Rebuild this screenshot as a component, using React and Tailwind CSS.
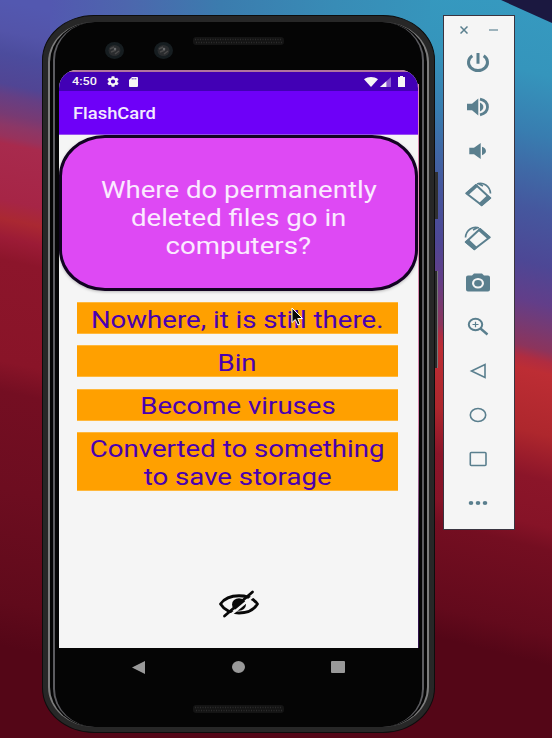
import React from "react";

function Wallpaper() {
  return (
    <svg className="absolute inset-0" width="552" height="738" viewBox="0 0 552 738">
      <defs>
        <linearGradient id="left" gradientUnits="userSpaceOnUse" x1="0" y1="0" x2="-150" y2="720">
          <stop offset="0" stopColor="#5358b0" />
          <stop offset="0.04" stopColor="#5354a9" />
          <stop offset="0.07" stopColor="#4c4c9d" />
          <stop offset="0.11" stopColor="#514594" />
          <stop offset="0.125" stopColor="#653f84" />
          <stop offset="0.15" stopColor="#783a73" />
          <stop offset="0.165" stopColor="#8c3766" />
          <stop offset="0.18" stopColor="#98325c" />
          <stop offset="0.19" stopColor="#a82a4d" />
          <stop offset="0.265" stopColor="#a62546" />
          <stop offset="0.29" stopColor="#aa2832" />
          <stop offset="0.315" stopColor="#9c1b36" />
          <stop offset="0.345" stopColor="#8c152b" />
          <stop offset="0.48" stopColor="#891428" />
          <stop offset="0.52" stopColor="#740e22" />
          <stop offset="0.65" stopColor="#6d0d20" />
          <stop offset="0.8" stopColor="#600a1b" />
          <stop offset="0.86" stopColor="#540617" />
          <stop offset="1" stopColor="#540617" />
        </linearGradient>
        <linearGradient id="right" gradientUnits="userSpaceOnUse" x1="552" y1="0" x2="370" y2="720">
          <stop offset="0" stopColor="#369ac0" />
          <stop offset="0.1" stopColor="#3595bc" />
          <stop offset="0.18" stopColor="#387db0" />
          <stop offset="0.23" stopColor="#3f69a6" />
          <stop offset="0.28" stopColor="#45579e" />
          <stop offset="0.35" stopColor="#4d4795" />
          <stop offset="0.4" stopColor="#623e89" />
          <stop offset="0.43" stopColor="#763a73" />
          <stop offset="0.46" stopColor="#8c345c" />
          <stop offset="0.475" stopColor="#b02c40" />
          <stop offset="0.49" stopColor="#bd2d34" />
          <stop offset="0.57" stopColor="#ae272d" />
          <stop offset="0.605" stopColor="#9a1c2b" />
          <stop offset="0.63" stopColor="#8b1529" />
          <stop offset="0.69" stopColor="#861327" />
          <stop offset="0.72" stopColor="#740e21" />
          <stop offset="0.83" stopColor="#630a1c" />
          <stop offset="0.87" stopColor="#540617" />
          <stop offset="1" stopColor="#540617" />
        </linearGradient>
        <linearGradient id="top" x1="0" x2="1" y1="0" y2="0">
          <stop offset="0" stopColor="#5358b0" />
          <stop offset="0.2" stopColor="#4d66ad" />
          <stop offset="0.45" stopColor="#3b7cae" />
          <stop offset="0.75" stopColor="#388cb6" />
          <stop offset="1" stopColor="#3695bc" />
        </linearGradient>
      </defs>
      <rect width="240" height="738" fill="url(#left)" />
      <rect x="240" width="312" height="738" fill="url(#right)" />
      <rect x="50" width="380" height="40" fill="url(#top)" />
      <path d="M501 0H552V23Z" fill="#1b1840" />
    </svg>
  );
}

function Lens() {
  return (
    <svg width="19" height="17" viewBox="0 0 19 17">
      <ellipse cx="9.5" cy="8.5" rx="9.5" ry="8.5" fill="#161d20" />
      <ellipse cx="9.5" cy="8.5" rx="6" ry="5.5" fill="#2a2c2e" />
      <path d="M5 7l4-2M6 10l5-2M10 12l4-3" stroke="#4a4a4a" strokeWidth="1.5" />
      <circle cx="10" cy="7" r="1.3" fill="#67686a" />
    </svg>
  );
}

function Speaker() {
  return (
    <svg width="91" height="8" viewBox="0 0 91 8">
      <rect width="91" height="8" rx="3" fill="#141414" />
      <path d="M2 2.5H89M3 5.5H89" stroke="#2c2c2c" strokeWidth="1.5" strokeDasharray="1 1.5" />
    </svg>
  );
}

function StatusBar() {
  return (
    <div className="flex h-[19px] shrink-0 items-center bg-[#4200b5] pl-[13px] pr-[13px] text-[#f5f5f5]">
      <span className="w-[26px] whitespace-nowrap text-[11.5px] leading-none font-medium">
        <span className="inline-block origin-left scale-x-[1.1]">4:50</span>
      </span>
      <svg className="ml-[9px]" width="12" height="11" viewBox="2 2 20 20" preserveAspectRatio="none" fill="currentColor">
        <path d="M19.14 12.94a7 7 0 0 0 0-1.88l2.03-1.58a.5.5 0 0 0 .12-.61l-1.92-3.32a.5.5 0 0 0-.59-.22l-2.39.96a7 7 0 0 0-1.62-.94l-.36-2.54a.5.5 0 0 0-.48-.41h-3.84a.5.5 0 0 0-.47.41l-.36 2.54a7.4 7.4 0 0 0-1.62.94l-2.39-.96a.5.5 0 0 0-.59.22L2.74 8.87a.5.5 0 0 0 .12.61l2.03 1.58a7 7 0 0 0 0 1.88l-2.03 1.58a.5.5 0 0 0-.12.61l1.92 3.32c.12.22.37.29.59.22l2.39-.96c.5.38 1.03.7 1.62.94l.36 2.54c.05.24.24.41.48.41h3.84c.24 0 .44-.17.47-.41l.36-2.54a7.4 7.4 0 0 0 1.62-.94l2.39.96c.22.08.47 0 .59-.22l1.92-3.32a.5.5 0 0 0-.12-.61zM12 15.6a3.6 3.6 0 1 1 0-7.2 3.6 3.6 0 0 1 0 7.2z" />
      </svg>
      <svg className="ml-[10px]" width="9" height="10" viewBox="0 0 10 10" preserveAspectRatio="none">
        <path d="M3.3 0H9a1 1 0 0 1 1 1v8a1 1 0 0 1-1 1H1a1 1 0 0 1-1-1V3z" fill="currentColor" />
        <path d="M3.6 1.2v1.2M5.5 1.2v1.2M7.5 1.2v1.2" stroke="#4200b5" strokeWidth=".9" />
      </svg>
      <svg className="ml-auto" width="14" height="10" viewBox="0 0 14 10">
        <path d="M0 2.2C4-.7 10-.7 14 2.2L7 10z" fill="currentColor" />
      </svg>
      <svg className="ml-[2px]" width="11" height="10" viewBox="0 0 11 10">
        <path d="M0 10L11 0V10z" fill="#8a5bd0" />
        <path d="M0 10L6.4 4.2V10z" fill="currentColor" />
      </svg>
      <svg className="ml-[7px]" width="7" height="11" viewBox="0 0 7 11">
        <path d="M2 0H5V1H7V11H0V1H2Z" fill="currentColor" />
      </svg>
    </div>
  );
}

function Line({ children }) {
  return <span className="block origin-center scale-x-[1.15] whitespace-nowrap">{children}</span>;
}

function Answer({ lines, tall }) {
  return (
    <button
      className={
        "flex w-full flex-col items-center justify-center border-y border-[#ffb83c] bg-[#ffa000] pt-[3px] text-[24px] leading-[28px] text-[#4a00b0] " +
        (tall ? "h-[59px]" : "h-[32px]")
      }
    >
      {lines.map((l) => (
        <Line key={l}>{l}</Line>
      ))}
    </button>
  );
}

function EyeOff() {
  return (
    <svg width="40" height="28" viewBox="0 0 40 28" fill="none" stroke="#080808">
      <path d="M1.5 14C9 3 31 3 38.5 14C31 26 9 26 1.5 14Z" strokeWidth="2.8" strokeLinejoin="round" />
      <ellipse cx="20" cy="14.5" rx="7" ry="6.2" fill="#080808" stroke="none" />
      <path d="M8 28L37 4" stroke="#f5f5f5" strokeWidth="2.4" />
      <path d="M5.5 26L33.5 2" strokeWidth="2.8" strokeLinecap="round" />
    </svg>
  );
}

function Screen() {
  return (
    <div className="flex h-[578px] w-[359px] flex-col overflow-hidden rounded-t-[18px] bg-[#f5f5f5]">
      <div className="h-[2px] shrink-0 bg-[#b0749e]" />
      <StatusBar />
      <div className="flex h-[44px] shrink-0 items-center border-b border-[#9a50f0] bg-[#6e00f8] pl-[14px] pt-[2px] text-[17px] font-medium text-[#f3eaff]">
        <span className="inline-block origin-left scale-x-[1.08]">FlashCard</span>
      </div>
      <div className="flex h-[156px] shrink-0 flex-col items-center justify-center rounded-[46px/41px] border-[3px] border-[#120322] bg-[#de49f4] pt-[12px] text-[24px] leading-[27.7px] text-[#fbeaff] shadow-[0_1px_3px_rgba(0,0,0,0.25)]">
        <Line>Where do permanently</Line>
        <Line>deleted files go in</Line>
        <Line>computers?</Line>
      </div>
      <div className="flex flex-col gap-[11.3px] pl-[18px] pr-[20px] pt-[11px]">
        <Answer lines={["Nowhere, it is still there."]} />
        <Answer lines={["Bin"]} />
        <Answer lines={["Become viruses"]} />
        <Answer tall lines={["Converted to something", "to save storage"]} />
      </div>
      <div className="mt-auto flex justify-center pb-[30px]">
        <EyeOff />
      </div>
    </div>
  );
}

function Phone() {
  return (
    <div className="relative mt-[15px] h-[718px] w-[393px] shrink-0">
      <div className="absolute left-[393px] top-[157px] h-[47px] w-[3px] bg-[#303030]" />
      <div className="absolute left-[393px] top-[256px] h-[97px] w-[3px] border-r border-[#777] bg-[#2a2a2a]" />
      <div className="h-full w-full rounded-[52px/45px] border border-[#0d0d0d] bg-[#272727] px-[5px] pb-[5px] pt-[6px] font-['Roboto',sans-serif]">
        <div className="h-full w-full rounded-[46px/40px] border-x-[2px] border-[#7d7d7d] bg-[#050505] px-[3px]">
          <div className="flex h-full w-full flex-col items-center rounded-[42px/38px] border-x-[2px] border-[#5c5c60] bg-[#050505]">
            <div className="flex h-[48px] w-full shrink-0 pl-[50px] pt-[20px]">
              <Lens />
              <div className="w-[30px]" />
              <Lens />
              <div className="-mt-[8px] ml-[20px] pt-[3px]">
                <Speaker />
              </div>
            </div>
            <div className="ml-[1px] flex shrink-0">
              <Screen />
              <div className="mt-[14px] w-[1px] bg-linear-to-b from-[#d88ab0] from-60% to-[#30104a] to-90%" />
            </div>
            <div className="flex h-[38px] w-full shrink-0 items-center text-[#999]">
              <svg className="ml-[77px]" width="13" height="13" viewBox="0 0 13 13"><path d="M13 0V13L0 6.5z" fill="currentColor" /></svg>
              <svg className="ml-[87px]" width="13" height="12" viewBox="0 0 13 12"><ellipse cx="6.5" cy="6" rx="6.5" ry="6" fill="currentColor" /></svg>
              <div className="ml-[86px] h-[12px] w-[14px] rounded-[1px] bg-[#999]" />
            </div>
            <div className="mt-[19px]">
              <Speaker />
            </div>
          </div>
        </div>
      </div>
    </div>
  );
}

const rotateArt = (
  <>
    <path d="M13 3L27 16L18.5 23L3.5 11.5Z" fill="none" stroke="currentColor" strokeWidth="2" strokeLinejoin="round" />
    <path d="M2 11.3L12.8 2L15.3 4.3L5.5 13ZM28.5 16L18.7 24.5L15.5 21.5L24.5 13Z" fill="currentColor" />
    <path d="M14 2C20-.5 27 4 27.5 11.5M15 1.5L20 4" fill="none" stroke="currentColor" strokeWidth="1.6" />
  </>
);

const tools = [
  <path key="power" fill="none" stroke="currentColor" strokeWidth="3" d="M15 3V13.8M9.3 5.8A9.5 8.2 0 1 0 20.7 5.8" />,
  <g key="up">
    <path d="M4 9.8H9L15.3 4.5V21.5L9 16.2H4Z" fill="currentColor" />
    <path d="M17 8.5C21.5 10.5 21.5 15.5 17 17.5Z" fill="currentColor" />
    <path d="M17 5.2C27 7.5 27 18.5 17 20.8" fill="none" stroke="currentColor" strokeWidth="2.8" />
  </g>,
  <g key="down">
    <path d="M6.3 9.8H11L17.7 5V21L11 16.2H6.3Z" fill="currentColor" />
    <path d="M19 8.8C24.3 10.5 24.3 15.5 19 17.2Z" fill="currentColor" />
  </g>,
  <g key="left">{rotateArt}</g>,
  <g key="right" transform="translate(30 0) scale(-1 1)">{rotateArt}</g>,
  <g key="camera" transform="translate(0 -.5)">
    <path fillRule="evenodd" fill="currentColor" d="M11 4H19L21 6H25Q27 6 27 8V20Q27 22 25 22H5Q3 22 3 20V8Q3 6 5 6H9ZM15 8.5A6 5.3 0 1 0 15 19.1A6 5.3 0 0 0 15 8.5Z" />
    <ellipse cx="15" cy="13.8" rx="3.8" ry="3.2" fill="currentColor" />
  </g>,
  <g key="zoom" fill="none" stroke="currentColor">
    <ellipse cx="12.5" cy="10.5" rx="6.7" ry="5.8" strokeWidth="2" />
    <path d="M9.5 10.5H15.5M12.5 7.8V13.2" strokeWidth="1.2" />
    <path d="M17.5 14.5L24.5 20.5" strokeWidth="2.4" />
  </g>,
  <path key="back" d="M22 6.5V19.5L8.5 13Z" fill="none" stroke="currentColor" strokeWidth="1.6" />,
  <ellipse key="home" cx="15" cy="13" rx="7.7" ry="6.5" fill="none" stroke="currentColor" strokeWidth="1.6" />,
  <rect key="recent" x="7.3" y="6.5" width="15.7" height="13" rx="1" fill="none" stroke="currentColor" strokeWidth="1.6" />,
  <g key="more" fill="currentColor">
    <ellipse cx="8" cy="13" rx="2.3" ry="2" />
    <ellipse cx="15" cy="13" rx="2.3" ry="2" />
    <ellipse cx="22" cy="13" rx="2.3" ry="2" />
  </g>,
];

function Toolbar() {
  return (
    <div className="relative ml-[8px] mt-[15px] flex h-[515px] w-[72px] shrink-0 flex-col items-center border border-[#3a3440] bg-[#f5f5f5] text-[#5a7f8e]">
      <div className="flex h-[28px] w-full items-center pl-[16px]">
        <svg width="8" height="8" viewBox="0 0 8 8"><path d="M.5 .5L7.5 7.5M7.5 .5L.5 7.5" stroke="currentColor" strokeWidth="1.5" /></svg>
        <div className="ml-[21px] h-[2px] w-[9px] bg-[#9db3bc]" />
      </div>
      <div className="flex flex-col gap-[18px] pt-[6px]">
        {tools.map((t, i) => (
          <svg key={i} className="-ml-[2px] block" width="30" height="26" viewBox="0 0 30 26">
            {t}
          </svg>
        ))}
      </div>
    </div>
  );
}

export default function App() {
  return (
    <div className="relative flex h-[738px] w-[552px] items-start overflow-hidden bg-[#540617] pl-[42px]">
      <Wallpaper />
      <Phone />
      <Toolbar />
      <svg className="absolute left-[291px] top-[307px]" width="13" height="20" viewBox="0 0 13 20">
        <path d="M1 1V15.5L4.3 12.5L6.8 18L9 17L6.7 11.5H11.5Z" fill="#080808" stroke="#fff" strokeWidth="1" />
      </svg>
    </div>
  );
}
